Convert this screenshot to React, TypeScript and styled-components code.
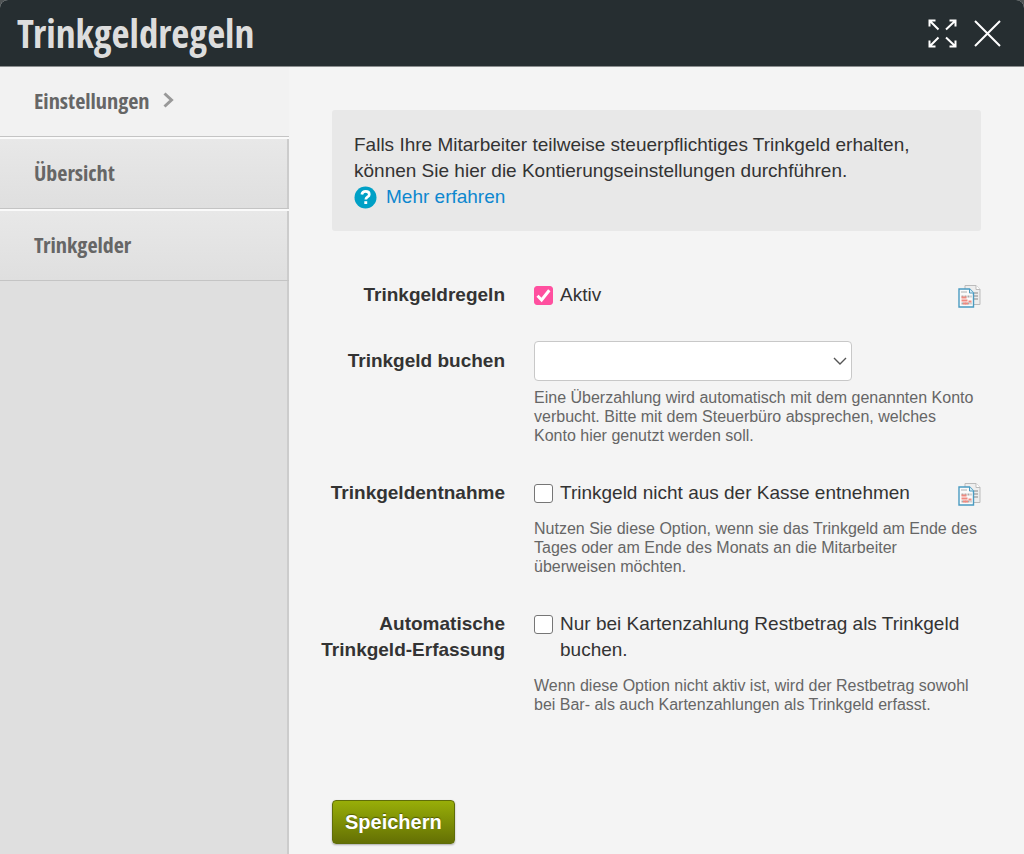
import React from "react";
import styled, { createGlobalStyle, css } from "styled-components";

const GlobalStyle = createGlobalStyle`
  *, *::before, *::after { box-sizing: border-box; }
  body {
    margin: 0;
    background: #4e5354;
    color: #333;
    font-family: "Liberation Sans", Arial, sans-serif;
    font-size: 19px;
    line-height: 26px;
  }
`;

const condensed = css`
  font-family: "Open Sans Condensed", "Liberation Sans Narrow", "Open Sans", sans-serif;
  font-weight: 700;
`;

const Dialog = styled.div`
  display: flex;
  flex-direction: column;
  min-height: 100vh;
  border-radius: 8px 8px 0 0;
  overflow: hidden;
  background: #f4f4f4;
`;

const Header = styled.header`
  display: flex;
  align-items: center;
  justify-content: space-between;
  height: 67px;
  padding: 0 23px 0 17px;
  background: #262e31;
  border-bottom: 1px solid #8b8e8f;
`;

const Title = styled.h1`
  ${condensed}
  margin: 0;
  font-size: 39px;
  line-height: 64px;
  color: #ddd;
`;

const HeaderActions = styled.div`
  display: flex;
  align-items: center;
  gap: 17px;
`;

const IconButton = styled.button`
  display: flex;
  padding: 0;
  border: 0;
  background: none;
  color: #fff;
  cursor: pointer;
`;

const Body = styled.div`
  display: flex;
  flex: 1;
`;

const Sidebar = styled.nav`
  flex: 0 0 289px;
  background: linear-gradient(to left, #ccc 2px, #dfdfdf 2px);
`;

const NavItem = styled.a<{ $active?: boolean }>`
  ${condensed}
  display: flex;
  align-items: center;
  gap: 14px;
  height: 72px;
  padding: 0 0 4px 34px;
  border-top: 2px solid #fafafa;
  border-bottom: 1px solid #c4c4c4;
  background: ${(p) =>
    p.$active
      ? "#f2f2f2"
      : "linear-gradient(to left, #ccc 2px, transparent 2px), linear-gradient(#e8e8e8, #dfdfdf)"};
  color: #666;
  font-size: 22px;
  text-decoration: none;
  &:first-child { height: 70px; border-top: 0; }
`;

const Main = styled.main`
  flex: 1;
  min-width: 0;
  padding: 43px 43px 10px 0;
`;

const Info = styled.section`
  margin: 0 0 51px 43px;
  padding: 22px 22px 21px;
  border-radius: 3px;
  background: #e8e8e8;
`;

const Paragraph = styled.p`
  margin: 0;
`;

const MoreLink = styled.a`
  display: flex;
  align-items: center;
  gap: 9px;
  width: fit-content;
  color: #0d87cf;
  text-decoration: none;
`;

const Row = styled.div<{ $gap?: number }>`
  display: grid;
  grid-template-columns: 216px minmax(0, 1fr);
  column-gap: 29px;
  margin-bottom: ${(p) => p.$gap ?? 35}px;
`;

const RowLabel = styled.label<{ $inset?: boolean }>`
  padding-top: ${(p) => (p.$inset ? 7 : 0)}px;
  font-weight: 700;
  text-align: right;
`;

const FieldLine = styled.div`
  display: flex;
  justify-content: space-between;
`;

const CheckLabel = styled.label`
  display: flex;
  align-items: flex-start;
  gap: 7px;
`;

const CheckBoxWrap = styled.span`
  position: relative;
  display: flex;
  padding-top: 4px;
  svg {
    position: absolute;
    left: 0;
    top: 4px;
    pointer-events: none;
    visibility: hidden;
  }
  input:checked + svg { visibility: visible; }
`;

const CheckInput = styled.input`
  appearance: none;
  width: 19px;
  height: 19px;
  margin: 0;
  border: 1px solid #767676;
  border-radius: 3px;
  background: #fff;
  &:checked { border-color: #ff4f9f; background: #ff4f9f; }
`;

const SelectWrap = styled.div`
  position: relative;
  width: 318px;
  max-width: 100%;
  svg {
    position: absolute;
    right: 5px;
    top: 15px;
    pointer-events: none;
  }
`;

const Select = styled.select`
  appearance: none;
  display: block;
  width: 100%;
  height: 40px;
  padding: 0 28px 0 10px;
  border: 1px solid #c8c8c8;
  border-radius: 4px;
  background: #fff;
  font: inherit;
`;

const Help = styled.p<{ $near?: boolean }>`
  margin: ${(p) => (p.$near ? 7 : 13)}px 0 0;
  color: #666;
  font-size: 16px;
  line-height: 19px;
`;

const CopyButton = styled(IconButton)`
  padding-top: 2px;
  align-self: flex-start;
`;

const SaveButton = styled.button`
  display: block;
  height: 44px;
  margin: 86px 0 0 43px;
  padding: 0 12px;
  border: 1px solid #5f6d08;
  border-radius: 4px;
  background: linear-gradient(#98ae08, #647004);
  box-shadow: 0 1px 2px rgba(0, 0, 0, 0.3);
  color: #fff;
  font: inherit;
  font-size: 20px;
  font-weight: 700;
  text-shadow: 0 -1px 1px rgba(0, 0, 0, 0.4);
  cursor: pointer;
`;

const ExpandIcon = () => (
  <svg width="29" height="29" viewBox="0 0 29 29" fill="none" stroke="currentColor" strokeWidth="2">
    <path d="M10.500 10.500 2 2M1.500 7.500V1.500H7.500M18 10.500 27 2M21.500 1.500h6V7.500M10.500 18.500 2 27M1.500 21.500v6H7.500M18 18.500 27 27M21.500 27.500h6V21.500" />
  </svg>
);

const CloseIcon = () => (
  <svg width="27" height="27" viewBox="0 0 27 27" fill="none" stroke="currentColor" strokeWidth="2">
    <path d="M1 1l25 25M26 1 1 26" />
  </svg>
);

const ChevronIcon = () => (
  <svg width="11" height="16" viewBox="0 0 11 16" fill="none" stroke="#999" strokeWidth="3">
    <path d="M1.500 1.500 8.500 8l-7 6.500" />
  </svg>
);

const HelpIcon = () => (
  <svg width="23" height="23" viewBox="0 0 23 23">
    <circle cx="11.500" cy="11.500" r="11" fill="#00a0c6" />
    <path d="M7.800 8.500C8.300 6.300 9.700 5.400 11.600 5.400c2.200 0 3.700 1.200 3.700 3 0 2.600-3.500 2.500-3.500 5.100" fill="none" stroke="#fff" strokeWidth="2.700" />
    <path d="M10.300 15.200h2.900v2.800h-2.900z" fill="#fff" />
  </svg>
);

const CheckIcon = () => (
  <svg width="19" height="19" viewBox="0 0 19 19" fill="none" stroke="#fff" strokeWidth="3">
    <path d="M3.500 9.800 7.600 14 15.300 4.200" />
  </svg>
);

const DownIcon = () => (
  <svg width="14" height="10" viewBox="0 0 14 10" fill="none" stroke="#555" strokeWidth="1.400">
    <path d="M1 2l6 6 6-6" />
  </svg>
);

const CopyIcon = () => (
  <svg width="23" height="24" viewBox="0 0 23 24">
    <path d="M7 1.500h11l4 4V20.500H7z" fill="#eee" stroke="#bbb" />
    <path d="M18 1.500v4h4" fill="#fff" stroke="#bbb" />
    <path d="M16 9h4M16 12h4M16 15h4" stroke="#bbb" strokeWidth="2" />
    <path d="M1 5h10.500l4 4v14H1z" fill="#fafafa" stroke="#4a9bc1" strokeWidth="1.400" />
    <path d="M11.500 5v4h4" fill="#d9edf6" stroke="#4a9bc1" />
    <path d="M3 8h6" stroke="#d5d5d5" strokeWidth="2" />
    <path d="M3.500 12.500h10M3.500 19.500h10" stroke="#aaa" strokeWidth="2" strokeDasharray="2 1" />
    <path d="M3.500 13.500h5M3.500 16.500h6M10.500 17.500h3M5 19.500h5" stroke="#f08a80" strokeWidth="2" />
  </svg>
);

const CheckField = ({ id, text, checked }: { id: string; text: string; checked?: boolean }) => (
  <CheckLabel>
    <CheckBoxWrap>
      <CheckInput id={id} type="checkbox" defaultChecked={checked} />
      <CheckIcon />
    </CheckBoxWrap>
    <span>{text}</span>
  </CheckLabel>
);

const Copy = () => (
  <CopyButton type="button" aria-label="Kopieren">
    <CopyIcon />
  </CopyButton>
);

export default function App() {
  return (
    <>
      <GlobalStyle />
      <Dialog>
        <Header>
          <Title>Trinkgeldregeln</Title>
          <HeaderActions>
            <IconButton type="button" aria-label="Vollbild"><ExpandIcon /></IconButton>
            <IconButton type="button" aria-label="Schließen"><CloseIcon /></IconButton>
          </HeaderActions>
        </Header>
        <Body>
          <Sidebar>
            <NavItem href="#einstellungen" $active>Einstellungen<ChevronIcon /></NavItem>
            <NavItem href="#uebersicht">Übersicht</NavItem>
            <NavItem href="#trinkgelder">Trinkgelder</NavItem>
          </Sidebar>
          <Main>
            <Info>
              <Paragraph>
                Falls Ihre Mitarbeiter teilweise steuerpflichtiges Trinkgeld erhalten, können Sie hier die
                Kontierungseinstellungen durchführen.
              </Paragraph>
              <MoreLink href="#mehr"><HelpIcon />Mehr erfahren</MoreLink>
            </Info>
            <form onSubmit={(e) => e.preventDefault()}>
              <Row $gap={33}>
                <RowLabel htmlFor="aktiv">Trinkgeldregeln</RowLabel>
                <FieldLine>
                  <CheckField id="aktiv" text="Aktiv" checked />
                  <Copy />
                </FieldLine>
              </Row>
              <Row>
                <RowLabel htmlFor="konto" $inset>Trinkgeld buchen</RowLabel>
                <div>
                  <SelectWrap>
                    <Select id="konto"><option value="" /></Select>
                    <DownIcon />
                  </SelectWrap>
                  <Help $near>
                    Eine Überzahlung wird automatisch mit dem genannten Konto verbucht. Bitte mit dem Steuerbüro
                    absprechen, welches Konto hier genutzt werden soll.
                  </Help>
                </div>
              </Row>
              <Row>
                <RowLabel htmlFor="entnahme">Trinkgeldentnahme</RowLabel>
                <div>
                  <FieldLine>
                    <CheckField id="entnahme" text="Trinkgeld nicht aus der Kasse entnehmen" />
                    <Copy />
                  </FieldLine>
                  <Help>
                    Nutzen Sie diese Option, wenn sie das Trinkgeld am Ende des Tages oder am Ende des Monats an die
                    Mitarbeiter überweisen möchten.
                  </Help>
                </div>
              </Row>
              <Row $gap={0}>
                <RowLabel htmlFor="erfassung">Automatische Trinkgeld-Erfassung</RowLabel>
                <div>
                  <CheckField id="erfassung" text="Nur bei Kartenzahlung Restbetrag als Trinkgeld buchen." />
                  <Help>
                    Wenn diese Option nicht aktiv ist, wird der Restbetrag sowohl bei Bar- als auch Kartenzahlungen als
                    Trinkgeld erfasst.
                  </Help>
                </div>
              </Row>
              <SaveButton type="submit">Speichern</SaveButton>
            </form>
          </Main>
        </Body>
      </Dialog>
    </>
  );
}
